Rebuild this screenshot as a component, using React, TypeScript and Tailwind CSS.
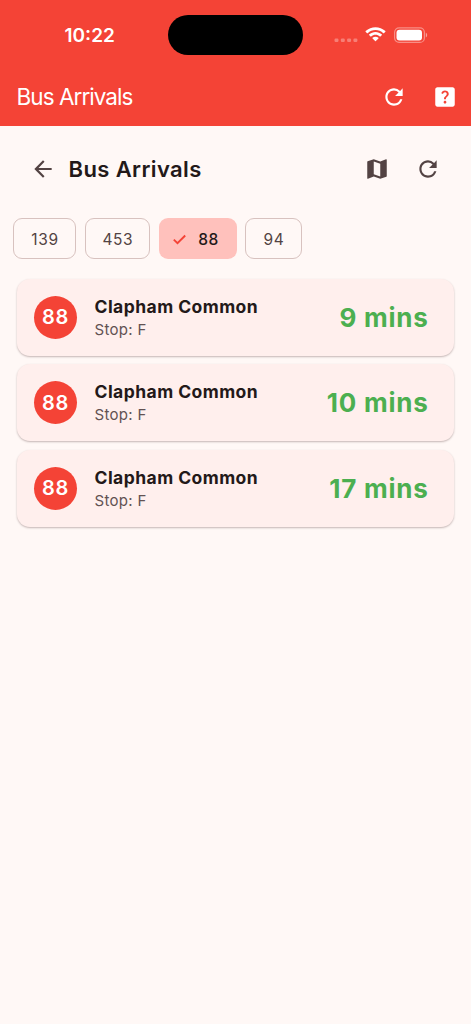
import React from "react";
import { MdArrowBack, MdHelpCenter, MdMap, MdRefresh } from "react-icons/md";

const routes = [
  { name: "139", width: "w-[63px]" },
  { name: "453", width: "w-[65.5px]" },
  { name: "88", width: "w-[78px]" },
  { name: "94", width: "w-[56.5px]" },
];

const arrivals = [
  { route: "88", destination: "Clapham Common", stop: "F", due: "9 mins" },
  { route: "88", destination: "Clapham Common", stop: "F", due: "10 mins" },
  { route: "88", destination: "Clapham Common", stop: "F", due: "17 mins" },
];

const StatusBar: React.FC = () => (
  <div className="grid h-[69px] grid-cols-[168px_135px_1fr] items-center">
    <span className="pt-[3px] pl-[64.5px] text-[19px] font-semibold">10:22</span>
    <div className="h-[40px] rounded-full bg-black" />
    <div className="flex items-center pl-[31px]">
      <svg width="25" height="14" viewBox="0 0 25 14" fill="#fff" fillOpacity="0.32">
        <rect x="0.5" y="10.5" width="4" height="3.5" rx="1.2" />
        <rect x="6.8" y="10.5" width="4" height="3.5" rx="1.2" />
        <rect x="13.1" y="10.5" width="4" height="3.5" rx="1.2" />
        <rect x="19.4" y="10.5" width="4" height="3.5" rx="1.2" />
      </svg>
      <svg className="ml-[6px]" width="21" height="15" viewBox="0 0 17 12" fill="#fff">
        <path d="M8.5 2.4c2.4 0 4.6.9 6.3 2.5.1.1.3.1.5 0l1.2-1.2c.1-.2.1-.4 0-.5C12-1 5-1 .5 3.2c-.1.1-.1.3 0 .5l1.2 1.2c.1.1.3.1.5 0C3.9 3.3 6.1 2.4 8.5 2.4z" />
        <path d="M8.5 6.3c1.3 0 2.5.5 3.5 1.4.1.1.3.1.5 0l1.2-1.2c.1-.2.1-.4 0-.5-2.9-2.8-7.5-2.8-10.4 0-.1.1-.1.3 0 .5l1.2 1.2c.2.1.4.1.5 0 1-.9 2.2-1.4 3.5-1.4z" />
        <path d="M10.9 9.2c.1-.1.1-.3 0-.5-1.4-1.2-3.4-1.2-4.8 0-.1.2-.1.4 0 .5l2.1 2.1c.2.2.4.2.6 0z" />
      </svg>
      <svg className="ml-[8px]" width="34" height="16" viewBox="0 0 34 16" fill="#fff">
        <rect x="0.6" y="0.8" width="29.8" height="14.6" rx="4.5" fill="none" stroke="#fff" strokeOpacity="0.4" strokeWidth="1.2" />
        <rect x="2.5" y="2.7" width="25.5" height="10.8" rx="3" />
        <path d="M31.8 5.8c1.8.6 1.8 4 0 4.6z" fillOpacity="0.5" />
      </svg>
    </div>
  </div>
);

const App: React.FC = () => {
  const selected = "88";

  return (
    <div className="min-h-screen w-full bg-[#fff8f6] font-['Inter','Liberation_Sans',sans-serif] whitespace-nowrap text-[#231919]">
      <header className="h-[126px] bg-[#f44336] text-white">
        <StatusBar />
        <div className="flex h-[55px] items-center pr-[13px] pl-[16.5px]">
          <h1 className="flex-1 pt-px text-[22.5px] font-normal tracking-[-0.95px]">Bus Arrivals</h1>
          <MdRefresh className="mr-[25px] size-[26px]" />
          <MdHelpCenter className="size-[26px]" />
        </div>
      </header>

      <div className="flex h-[86px] items-center pr-[30px] pl-[29.5px] text-[#534343]">
        <MdArrowBack className="size-[26px]" />
        <h2 className="ml-[13px] flex-1 text-[22px] font-semibold tracking-[0.4px] text-[#231919]">
          Bus Arrivals
        </h2>
        <MdMap className="mr-[25px] size-[26px]" />
        <MdRefresh className="size-[26px]" />
      </div>

      <div className="flex gap-[8.6px] pt-[6px] pl-[13px]">
        {routes.map((route) => (
          <button
            key={route.name}
            className={`flex h-[41px] items-center rounded-[9px] pt-[2px] text-[15.5px] tracking-[0.6px] ${route.width} ${
              route.name === selected
                ? "bg-[#ffc1bc] pl-[14px] font-medium text-[#231919]"
                : "justify-center border border-[#d8c2bf] pl-px text-[#534343]"
            }`}
          >
            {route.name === selected && (
              <svg className="mr-[12.5px]" width="13" height="11" viewBox="0 0 13 11" fill="none" stroke="#f44336" strokeWidth="1.9">
                <path d="M0.8 5.6 4.5 9.2 12.2 1.5" />
              </svg>
            )}
            {route.name}
          </button>
        ))}
      </div>

      <div className="flex flex-col gap-[8.7px] px-[17px] pt-[19.5px]">
        {arrivals.map((arrival, index) => (
          <div
            key={index}
            className="flex h-[77px] items-center rounded-[13px] bg-[#ffefed] pr-[25.5px] pl-[17px] shadow-[0_1px_2px_rgba(60,30,30,0.3)]"
          >
            <div className="flex size-[43px] items-center justify-center rounded-full bg-[#f44336] text-[20px] font-semibold tracking-[0.8px] text-white">
              {arrival.route}
            </div>
            <div className="ml-[17.5px] flex-1 pt-[1.5px]">
              <p className="text-[17.5px] leading-[24px] font-bold tracking-[0.45px]">{arrival.destination}</p>
              <p className="text-[15px] leading-[22px] tracking-[0.3px] text-[#625252]">Stop: {arrival.stop}</p>
            </div>
            <p className="text-[26px] font-bold tracking-[0.75px] text-[#4caf50]">{arrival.due}</p>
          </div>
        ))}
      </div>
    </div>
  );
};

export default App;
